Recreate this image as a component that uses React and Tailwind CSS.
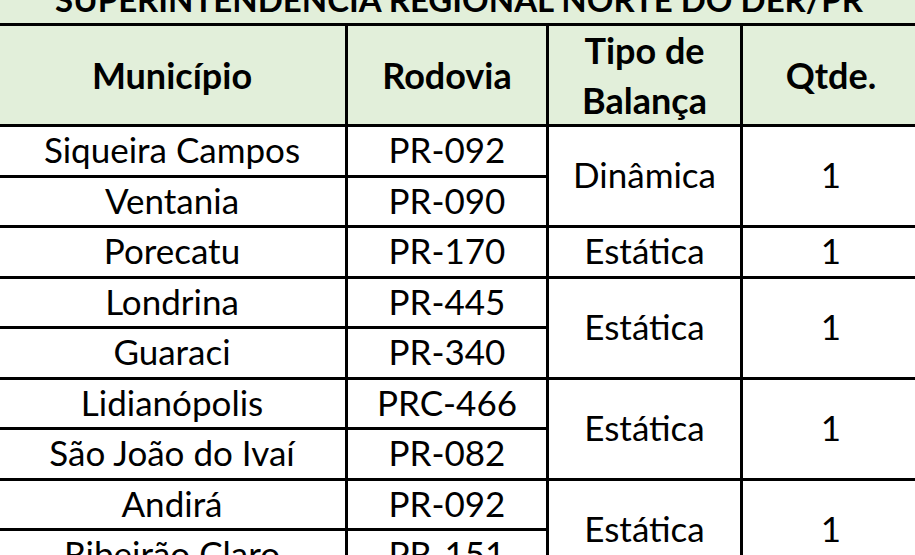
import React from 'react';

const rows = [
    { municipio: 'Siqueira Campos', rodovia: 'PR-092', tipo: 'Dinâmica', qtde: '1', span: 2 },
    { municipio: 'Ventania', rodovia: 'PR-090' },
    { municipio: 'Porecatu', rodovia: 'PR-170', tipo: 'Estática', qtde: '1', span: 1 },
    { municipio: 'Londrina', rodovia: 'PR-445', tipo: 'Estática', qtde: '1', span: 2 },
    { municipio: 'Guaraci', rodovia: 'PR-340' },
    { municipio: 'Lidianópolis', rodovia: 'PRC-466', tipo: 'Estática', qtde: '1', span: 2 },
    { municipio: 'São João do Ivaí', rodovia: 'PR-082' },
    { municipio: 'Andirá', rodovia: 'PR-092', tipo: 'Estática', qtde: '1', span: 2 },
    { municipio: 'Ribeirão Claro', rodovia: 'PR-151' },
];

const cell = 'flex items-center justify-center bg-white pb-[3px] text-[35px] leading-none text-black';
const head = 'flex flex-col items-center justify-center bg-[#e2efda] text-[36px] font-bold text-black';

const App = () => {
    return (
        <div className="h-screen w-full overflow-hidden bg-white [font-family:Lato,'Open_Sans',sans-serif]">
            <div className="-ml-[4px] -mt-[28px] grid w-max grid-cols-[346px_198px_191px_176px] grid-rows-[48px_98px_48px_47px_48px_47px_48px_47px_48px_47px_48px] gap-[3px] bg-black p-[3px]">
                {/* Título */}
                <div className="col-span-4 flex items-center justify-center bg-[#e2efda] text-[33px] font-bold leading-none text-black">
                    SUPERINTENDÊNCIA REGIONAL NORTE DO DER/PR
                </div>

                {/* Cabeçalho */}
                <div className={head}>Município</div>
                <div className={head}>Rodovia</div>
                <div className={`${head} leading-[50px]`}>
                    <span>Tipo de</span>
                    <span>Balança</span>
                </div>
                <div className={head}>Qtde.</div>

                {/* Linhas */}
                {rows.map((r, i) => (
                    <React.Fragment key={i}>
                        <div className={cell}>{r.municipio}</div>
                        <div className={cell}>{r.rodovia}</div>
                        {r.tipo && (
                            <>
                                <div className={`${cell} ${r.span === 2 ? 'row-span-2' : ''}`}>{r.tipo}</div>
                                <div className={`${cell} ${r.span === 2 ? 'row-span-2' : ''}`}>{r.qtde}</div>
                            </>
                        )}
                    </React.Fragment>
                ))}
            </div>
        </div>
    );
};

export default App;
